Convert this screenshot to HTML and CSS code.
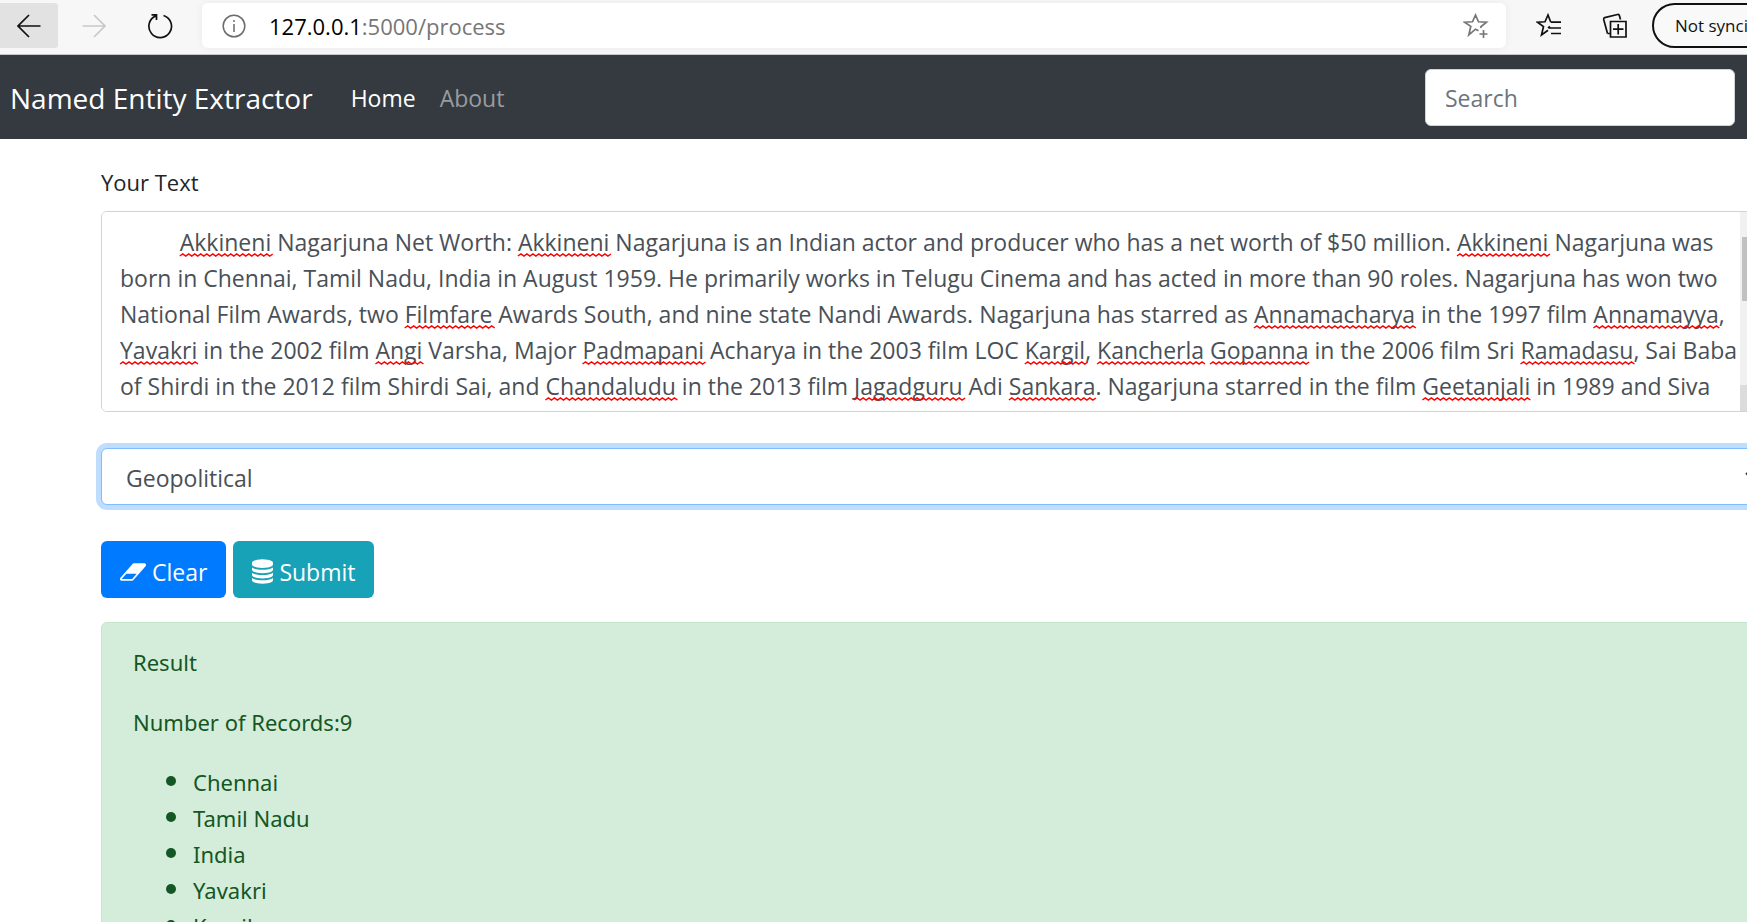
FILE: index.html
```html
<!DOCTYPE html>
<html lang="en">
<head>
<meta charset="utf-8">
<meta name="viewport" content="width=device-width, initial-scale=1">
<title>Named Entity Extractor</title>
<link rel="stylesheet" href="styles.css">
</head>
<body>
<header class="browser">
  <button class="tool tool-back" type="button" aria-label="Back">
    <svg width="24" height="24" viewBox="0 0 24 24"><path d="M23.500 12H1M12 1L1 12l11 11"/></svg>
  </button>
  <button class="tool tool-forward" type="button" aria-label="Forward">
    <svg width="24" height="24" viewBox="0 0 24 24"><path d="M.5 12H23M12 1l11 11-11 11"/></svg>
  </button>
  <button class="tool tool-reload" type="button" aria-label="Refresh">
    <svg width="26" height="26" viewBox="0 0 26 26"><path d="M16.500 2.500A11.300 11.300 0 1 1 8.800 2.900M4.500 1.800H9.500V7" /></svg>
  </button>
  <div class="address">
    <svg class="info" width="24" height="24" viewBox="0 0 24 24"><circle cx="12" cy="12" r="10.800"/><path d="M12 10v8M12 6v2"/></svg>
    <span class="url"><span class="host">127.0.0.1</span>:5000/process</span>
    <button class="star" type="button" aria-label="Add to favorites">
      <svg width="26" height="26" viewBox="0 0 26 26"><path d="M15.500 17.800L12.500 16.200 5.800 22l2-8.700L1.500 9.200l8-.4L12.500 2l3 6.800 8 .4-5.700 4.600.5 1.200M20.500 17v8M16.500 21h8"/></svg>
    </button>
  </div>
  <button class="tool tool-side" type="button" aria-label="Favorites">
    <svg width="26" height="26" viewBox="0 0 26 26"><path d="M15 9.200h10M13 15h12M15 20.500h10M12 17.300L5.500 22l2-8.500L1.500 9.200l7.500-.4L12 2l2.800 7.200M12 15l2-1.500"/></svg>
  </button>
  <button class="tool tool-side" type="button" aria-label="Collections">
    <svg width="26" height="26" viewBox="0 0 26 26"><path d="M8.500 8.500h15.500v15.500H8.500zM16.200 11v10.500M11 16.200h10.500M5.500 20.500L1.700 6.500q-.3-1.500 1-1.900L15.500 1.500q1.500-.3 1.900 1L18.500 6.500M5.500 20.500h3"/></svg>
  </button>
  <button class="profile" type="button">Not syncing</button>
</header>

<nav class="navbar">
  <a class="brand" href="#">Named Entity Extractor</a>
  <a class="nav-link active" href="#">Home</a>
  <a class="nav-link" href="#">About</a>
  <input class="search" type="search" placeholder="Search" aria-label="Search">
</nav>

<main class="content">
  <form class="form">
    <label class="label" for="rawtext">Your Text</label>
    <div class="editor">
      <textarea class="textarea" id="rawtext" name="rawtext" rows="5" spellcheck="false">          Akkineni Nagarjuna Net Worth: Akkineni Nagarjuna is an Indian actor and producer who has a net worth of $50 million. Akkineni Nagarjuna was
born in Chennai, Tamil Nadu, India in August 1959. He primarily works in Telugu Cinema and has acted in more than 90 roles. Nagarjuna has won two
National Film Awards, two Filmfare Awards South, and nine state Nandi Awards. Nagarjuna has starred as Annamacharya in the 1997 film Annamayya,
Yavakri in the 2002 film Angi Varsha, Major Padmapani Acharya in the 2003 film LOC Kargil, Kancherla Gopanna in the 2006 film Sri Ramadasu, Sai Baba
of Shirdi in the 2012 film Shirdi Sai, and Chandaludu in the 2013 film Jagadguru Adi Sankara. Nagarjuna starred in the film Geetanjali in 1989 and Siva</textarea>
      <svg class="marks" aria-hidden="true"><path id="marks"/></svg>
      <div class="scroll" aria-hidden="true"><div class="thumb"></div><div class="corner"></div></div>
    </div>
    <div class="picker">
      <select class="select" name="taskoption" aria-label="Entity type">
        <option>Geopolitical</option>
        <option>Organization</option>
        <option>Person</option>
        <option>Money</option>
      </select>
      <svg class="chevron" width="12" height="8" viewBox="0 0 12 8"><path d="M1 1l5 5 5-5"/></svg>
    </div>
    <div class="actions">
      <button class="btn btn-primary" type="reset">
        <svg width="26" height="18" viewBox="0 0 1920 1280"><path transform="matrix(1 0 0 -1 0 1280)" d="M896 128l336 384h-768l-336 -384h768zM1909 1205q15 -34 9.500 -71.500t-30.500 -65.500l-896 -1024q-38 -44 -96 -44h-768q-38 0 -69.500 20.500t-47.500 54.500q-15 34 -9.500 71.500t30.500 65.500l896 1024q38 44 96 44h768q38 0 69.500 -20.500t47.500 -54.500z"/></svg>
        Clear
      </button>
      <button class="btn btn-info" type="button">
        <svg width="21" height="25" viewBox="0 0 1536 1792"><path transform="matrix(1 0 0 -1 0 1536)" d="M768 768q237 0 443 43t325 127v-170q0 -69 -103 -128t-280 -93.500t-385 -34.500t-385 34.500t-280 93.500t-103 128v170q119 -84 325 -127t443 -43zM768 0q237 0 443 43t325 127v-170q0 -69 -103 -128t-280 -93.500t-385 -34.500t-385 34.500t-280 93.500t-103 128v170q119 -84 325 -127t443 -43zM768 384q237 0 443 43t325 127v-170q0 -69 -103 -128t-280 -93.500t-385 -34.500t-385 34.500t-280 93.500t-103 128v170q119 -84 325 -127t443 -43zM768 1536q208 0 385 -34.500t280 -93.500t103 -128v-128q0 -69 -103 -128t-280 -93.500t-385 -34.500t-385 34.500t-280 93.500t-103 128v128q0 69 103 128t280 93.500t385 34.500z"/></svg>
        Submit
      </button>
    </div>
  </form>
  <section class="alert">
    <p>Result</p>
    <p>Number of Records:9</p>
    <ul>
      <li>Chennai</li>
      <li>Tamil Nadu</li>
      <li>India</li>
      <li>Yavakri</li>
      <li>Kargil</li>
    </ul>
  </section>
</main>
<script src="script.js"></script>
</body>
</html>
```
FILE: styles.css
```css
* { box-sizing: border-box; }

body {
  margin: 0;
  height: 100vh;
  overflow: hidden;
  background: #fff;
  color: #212529;
  font: 23px/36px "Open Sans", "Noto Sans", sans-serif;
}

button, input, select, textarea { font: inherit; }

svg { display: block; flex: none; }

/* Browser toolbar */
.browser {
  display: flex;
  align-items: center;
  height: 55px;
  padding-bottom: 3px;
  overflow: hidden;
  background: #f7f7f7;
  border-bottom: 1px solid #c8c8c8;
}

.browser svg { fill: none; stroke: #111; stroke-width: 1.700; }

.tool {
  display: flex;
  flex: none;
  align-items: center;
  justify-content: center;
  width: 66px;
  height: 45px;
  padding: 0;
  border: 0;
  background: none;
}

.tool-back { width: 58px; border-radius: 0 3px 3px 0; background: #e2e2e2; }
.tool-forward { width: 72px; }
.browser .tool-forward svg { stroke: #c9c9c9; }
.tool-reload { width: 60px; margin-right: 12px; }
.tool-side:nth-of-type(4) { margin-left: 10px; }

.address {
  display: flex;
  flex: 1;
  align-items: center;
  gap: 23px;
  height: 45px;
  padding: 0 17px 0 20px;
  border-radius: 6px;
  background: #fff;
  box-shadow: 0 0 8px rgba(0, 0, 0, .06);
}

.browser .info { stroke: #6b6b6b; stroke-width: 1.500; }
.url { flex: 1; color: #767676; font-size: 22px; white-space: nowrap; }
.host { color: #000; }
.star { padding: 0; border: 0; background: none; }
.browser .star svg { stroke: #767676; }

.profile {
  flex: none;
  width: 140px;
  height: 45px;
  margin: 0 -45px 0 4px;
  padding: 0 0 0 21px;
  border: 2px solid #111;
  border-radius: 23px;
  background: #f9f9f9;
  color: #111;
  font-size: 17px;
  text-align: left;
  white-space: nowrap;
}

/* Site navigation */
.navbar {
  display: flex;
  align-items: center;
  gap: 24px;
  height: 84px;
  padding: 0 12px 0 10px;
  background: #343a40;
}

.brand, .nav-link { padding-top: 2px; text-decoration: none; }
.brand { margin-right: 14px; color: #fff; font-size: 28px; }
.nav-link { color: #999c9f; }
.nav-link.active { color: #fff; }

.search {
  width: 310px;
  height: 57px;
  margin-left: auto;
  padding: 2px 19px 0;
  border: 1px solid #ced4da;
  border-radius: 6px;
  background: #fff;
}

.search::placeholder { color: #6c757d; opacity: 1; }

/* The container runs slightly past the right edge of the window */
.content { margin: 25px -19px 0 101px; }

.label { display: block; margin-bottom: 11px; font-size: 22px; }

.editor {
  position: relative;
  height: 201px;
  margin-bottom: 36px;
  overflow: hidden;
  border: 1px solid #ced4da;
  border-radius: 6px;
}

.textarea {
  display: block;
  width: 100%;
  height: 100%;
  margin: 0;
  padding: 12px 18px 0;
  border: 0;
  outline: 0;
  overflow: hidden;
  resize: none;
  background: #fff;
  color: #495057;
  white-space: pre;
}

.marks {
  position: absolute;
  inset: 0;
  width: 100%;
  height: 100%;
  fill: none;
  stroke: #f00;
  stroke-width: 1.500;
  pointer-events: none;
}

.scroll {
  position: absolute;
  top: 0;
  right: 0;
  bottom: 0;
  width: 25px;
  background: #f1f1f1;
}

.thumb { height: 64px; margin: 25px 2px 84px; background: #c1c1c1; }
.corner { height: 26px; background: #dcdcdc; }

.picker { position: relative; margin-bottom: 36px; }

.select {
  display: block;
  width: 100%;
  height: 57px;
  padding: 2px 24px 0;
  border: 1px solid #80bdff;
  border-radius: 6px;
  outline: 0;
  appearance: none;
  background: #fff;
  box-shadow: 0 0 0 5px #bfdeff;
  color: #495057;
}

.chevron {
  position: absolute;
  top: 24px;
  right: 9px;
  fill: none;
  stroke: #333;
  stroke-width: 2;
}

.actions { display: flex; gap: 7px; margin-bottom: 24px; }

.btn {
  display: flex;
  align-items: center;
  gap: 6px;
  height: 57px;
  padding: 4px 19px 0;
  border: 0;
  border-radius: 6px;
  color: #fff;
}

.btn svg { fill: #fff; }
.btn-primary { background: #007bff; }
.btn-info { background: #17a2b8; }

.alert {
  padding: 21px 31px;
  border: 1px solid #c3e6cb;
  border-radius: 6px;
  background: #d4edda;
  color: #155724;
  font-family: "Noto Sans", "Open Sans", sans-serif;
  font-size: 22px;
}

.alert p { margin: 0 0 24px; }
.alert ul { margin: 0; padding-left: 60px; }
.alert li::marker { font-size: 28px; line-height: 0; }
```
FILE: script.js
```js
const unknown = /\b(Akkineni|Filmfare|Annamacharya|Annamayya|Yavakri|Angi|Padmapani|Kargil|Kancherla|Gopanna|Ramadasu|Chandaludu|Jagadguru|Sankara|Geetanjali)\b/g;
const field = document.getElementById("rawtext");
const marks = document.getElementById("marks");

function mark() {
  const style = getComputedStyle(field);
  const left = parseFloat(style.paddingLeft);
  const top = parseFloat(style.paddingTop);
  const lineHeight = parseFloat(style.lineHeight);
  const pen = document.createElement("canvas").getContext("2d");
  pen.font = style.fontSize + " " + style.fontFamily;
  let path = "";
  field.value.split("\n").forEach((line, row) => {
    const y = top + (row + 1) * lineHeight - 4;
    for (const word of line.matchAll(unknown)) {
      const start = left + pen.measureText(line.slice(0, word.index)).width;
      const end = start + pen.measureText(word[0]).width;
      path += `M${start} ${y}`;
      for (let x = start, up = true; x < end; x += 3, up = !up) {
        path += `l3 ${up ? -2 : 2}`;
      }
    }
  });
  marks.setAttribute("d", path);
}

field.addEventListener("input", mark);
mark();
```
